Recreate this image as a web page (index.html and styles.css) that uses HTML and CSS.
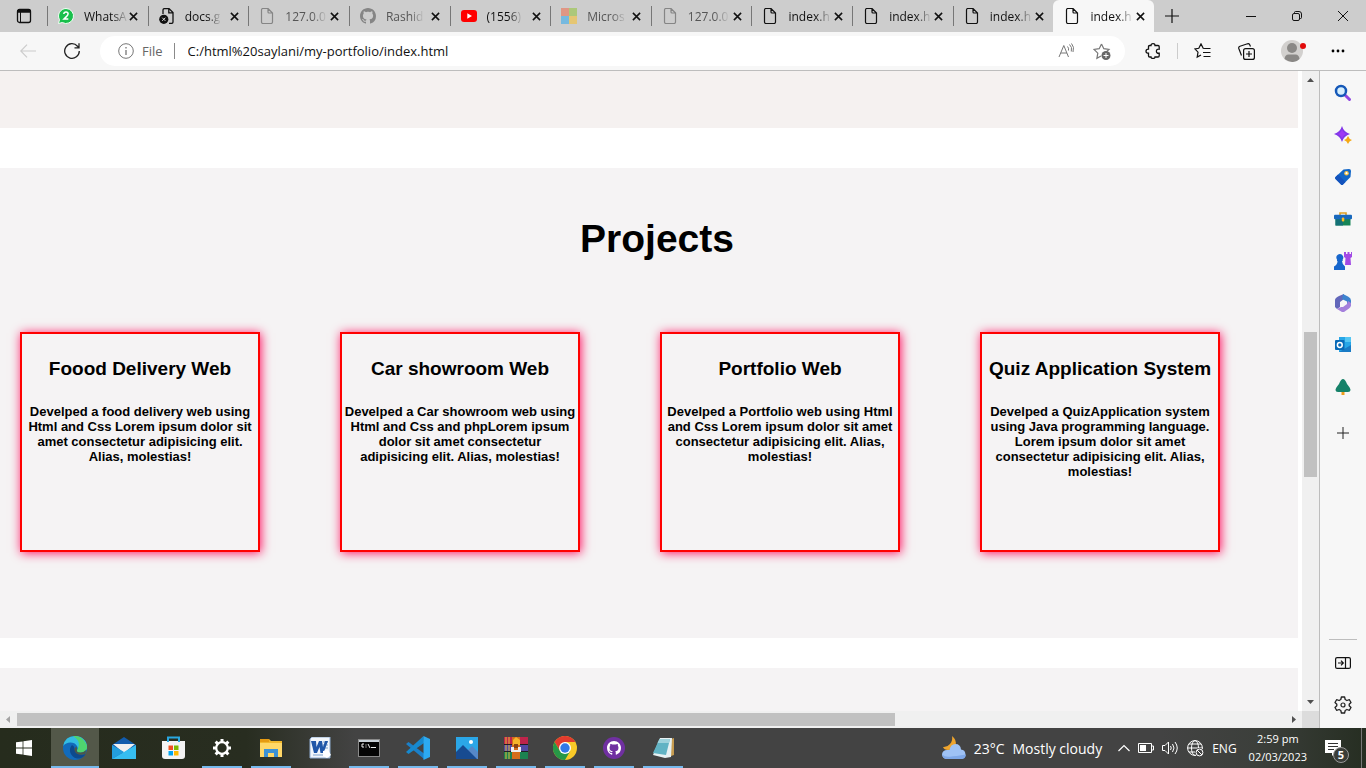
FILE: index.html
```html
<!DOCTYPE html>
<html lang="en">
<head>
<meta charset="utf-8">
<title>Projects</title>
<link rel="stylesheet" href="styles.css">
</head>
<body>
<svg class="defs" aria-hidden="true">
  <symbol id="doc" viewBox="0 0 16 16"><path d="M2.500 2Q2.500 .5 4 .5h5L13.500 5v9q0 1.500-1.500 1.500H4Q2.500 15.500 2.500 14zM9 .5V4q0 1 1 1h3.500" fill="none" stroke="currentColor" stroke-width="1.200"/></symbol>
  <symbol id="x" viewBox="0 0 10 10"><path d="M1 1l8 8M9 1L1 9" fill="none" stroke="currentColor" stroke-width="1.700"/></symbol>
  <symbol id="cat" viewBox="0 0 16 16"><path fill="currentColor" d="M8 0C3.580 0 0 3.580 0 8c0 3.540 2.290 6.530 5.470 7.590.4.070.55-.17.55-.38 0-.19-.01-.82-.01-1.490-2.010.37-2.530-.49-2.690-.94-.09-.23-.48-.94-.82-1.130-.28-.15-.68-.52-.01-.53.63-.01 1.080.58 1.230.82.72 1.210 1.870.87 2.330.66.070-.52.28-.87.51-1.070-1.780-.2-3.640-.89-3.640-3.950 0-.87.31-1.590.82-2.150-.08-.2-.36-1.020.08-2.120 0 0 .67-.21 2.200.82.64-.18 1.320-.27 2-.27s1.360.09 2 .27c1.530-1.040 2.200-.82 2.200-.82.44 1.100.16 1.920.08 2.120.51.56.82 1.270.82 2.150 0 3.070-1.870 3.750-3.650 3.950.29.25.54.73.54 1.480 0 1.070-.01 1.930-.01 2.200 0 .21.15.46.55.38A8.010 8.010 0 0 0 16 8c0-4.420-3.580-8-8-8z"/></symbol>
</svg>

<header class="tabbar">
  <button class="tab-menu" aria-label="Tab actions"><svg width="16" height="16" viewBox="0 0 16 16"><rect x="1.500" y="1.500" width="13" height="13" rx="2" fill="none" stroke="#111" stroke-width="1.300"/><path d="M1.500 4V3q0-1.500 1.500-1.500h10q1.500 0 1.500 1.500v1zM1.500 3h13v1h-13z" fill="#111" stroke="#111"/><path d="M4.500 4v10" stroke="#111"/></svg></button>
  <nav class="tabs" aria-label="Open tabs">
    <div class="tab"><button class="tab-link"><svg width="16" height="16" viewBox="0 0 16 16"><path d="M8 .5a7.500 7.500 0 1 1-3.700 14L.5 15.500l1-3.800A7.500 7.500 0 0 1 8 .5z" fill="#19bf4c" stroke="#f4fff6"/><path d="M5.800 6q.2-2 2.200-2t2.100 1.800q0 1.300-1.500 2.600L6 11h4.300" fill="none" stroke="#fff" stroke-width="1.500"/></svg><span>WhatsA</span></button><button class="close" aria-label="Close tab"><svg><use href="#x"/></svg></button></div>
    <div class="tab"><button class="tab-link"><svg width="16" height="16" viewBox="0 0 16 16"><path d="M4 6V2Q4 .6 5.400.6H10L14 4.500V14q0 1.400-1.400 1.400H10M9.800.6v4.200H14" fill="none" stroke="#111" stroke-width="1.300"/><circle cx="4.800" cy="11.300" r="4.600" fill="#111"/><path d="M3.200 9.700l3.200 3.200m0-3.200l-3.200 3.200" stroke="#ddd"/></svg><span>docs.g</span></button><button class="close" aria-label="Close tab"><svg><use href="#x"/></svg></button></div>
    <div class="tab faded"><button class="tab-link"><svg width="16" height="16"><use href="#doc"/></svg><span>127.0.0</span></button><button class="close" aria-label="Close tab"><svg><use href="#x"/></svg></button></div>
    <div class="tab faded"><button class="tab-link"><svg width="16" height="16"><use href="#cat"/></svg><span>Rashid</span></button><button class="close" aria-label="Close tab"><svg><use href="#x"/></svg></button></div>
    <div class="tab"><button class="tab-link"><svg width="16" height="16" viewBox="0 0 16 16"><rect y="2" width="16" height="12" rx="3" fill="#f00"/><path d="M6.300 5.300v5.400L11 8z" fill="#fff"/></svg><span>(1556)</span></button><button class="close" aria-label="Close tab"><svg><use href="#x"/></svg></button></div>
    <div class="tab faded"><button class="tab-link"><svg width="16" height="16" viewBox="0 0 16 16"><path fill="#e09684" d="M0 0h8v8H0z"/><path fill="#acc87a" d="M8 0h8v8H8z"/><path fill="#76b9df" d="M0 8h8v8H0z"/><path fill="#e5c673" d="M8 8h8v8H8z"/></svg><span>Micros</span></button><button class="close" aria-label="Close tab"><svg><use href="#x"/></svg></button></div>
    <div class="tab faded"><button class="tab-link"><svg width="16" height="16"><use href="#doc"/></svg><span>127.0.0</span></button><button class="close" aria-label="Close tab"><svg><use href="#x"/></svg></button></div>
    <div class="tab"><button class="tab-link"><svg width="16" height="16"><use href="#doc"/></svg><span>index.h</span></button><button class="close" aria-label="Close tab"><svg><use href="#x"/></svg></button></div>
    <div class="tab"><button class="tab-link"><svg width="16" height="16"><use href="#doc"/></svg><span>index.h</span></button><button class="close" aria-label="Close tab"><svg><use href="#x"/></svg></button></div>
    <div class="tab"><button class="tab-link"><svg width="16" height="16"><use href="#doc"/></svg><span>index.h</span></button><button class="close" aria-label="Close tab"><svg><use href="#x"/></svg></button></div>
    <div class="tab active"><button class="tab-link"><svg width="16" height="16"><use href="#doc"/></svg><span>index.h</span></button><button class="close" aria-label="Close tab"><svg><use href="#x"/></svg></button></div>
  </nav>
  <button class="new-tab" aria-label="New tab"><svg width="14" height="14" viewBox="0 0 14 14"><path d="M7 0v14M0 7h14" stroke="#111" stroke-width="1.200"/></svg></button>
  <div class="window-controls">
    <button aria-label="Minimize"><svg width="10" height="10"><path d="M0 5.500h10" stroke="#111"/></svg></button>
    <button aria-label="Restore"><svg width="10" height="10" viewBox="0 0 10 10"><rect x=".5" y="2.500" width="7" height="7" rx="1.500" fill="none" stroke="#111"/><path d="M2.500 2V1.500q0-1 1-1H7q2.500 0 2.500 2.500v3.500q0 1-1 1H8" fill="none" stroke="#111"/></svg></button>
    <button aria-label="Close"><svg width="10" height="10"><path d="M0 0l10 10M10 0L0 10" stroke="#111"/></svg></button>
  </div>
</header>

<div class="toolbar">
  <button class="nav-button" aria-label="Back"><svg width="16" height="14" viewBox="0 0 16 14"><path d="M16 7H1M7 .7L.8 7 7 13.300" fill="none" stroke="#ccc" stroke-width="1.200"/></svg></button>
  <button class="nav-button" aria-label="Reload"><svg width="16" height="16" viewBox="0 0 16 16"><path d="M15.300 8A7.300 7.300 0 1 1 13.500 3.200L14.500 4.500M15 .3v4.500h-4.500" fill="none" stroke="#222" stroke-width="1.300"/></svg></button>
  <form class="address">
    <svg width="16" height="16" viewBox="0 0 16 16"><circle cx="8" cy="8" r="7.300" fill="none" stroke="#767676"/><path d="M8 7v5M8 4v1.500" stroke="#767676" stroke-width="1.300"/></svg>
    <label for="url">File</label>
    <input id="url" type="text" value="C:/html%20saylani/my-portfolio/index.html">
    <button type="button" aria-label="Read aloud"><svg width="16" height="16" viewBox="0 0 16 16"><path d="M1 14L5.800 2.500 10.500 14M2.700 10h6.200M9.500 3.500q1.500 1.500 1 4M11.500 1.500q3 2.500 1.800 7M13.500 0.500q3.200 3.500 1.500 8.500" fill="none" stroke="#777"/></svg></button>
    <button type="button" aria-label="Add to favorites"><svg width="18" height="17" viewBox="0 0 18 17"><path d="M8.500 1l2.300 4.700 5.200.7-2.500 2.400M8.500 1L6.200 5.700 1 6.400l3.800 3.700-.9 5.200L8 13" fill="none" stroke="#777" stroke-width="1.200"/><circle cx="13" cy="12.500" r="4.500" fill="#666"/><path d="M13 10v5M10.500 12.500h5" stroke="#fff"/></svg></button>
  </form>
  <div class="tools">
    <button aria-label="Extensions"><svg width="16" height="16" viewBox="0 0 16 16"><path d="M6 2.500Q6 .7 8 .7T10 2.500h3q1.200 0 1.200 1.200v2.500q-2.800-.3-2.800 2t2.800 2v2.600q0 1.200-1.200 1.200h-3q0 1.500-2 1.500T6 14H4.700q-1.200 0-1.200-1.200V10.200Q1 10.200 1 8.200t2.500-2V3.700q0-1.200 1.200-1.200z" fill="none" stroke="#111" stroke-width="1.300"/></svg></button>
    <i class="divider"></i>
    <button aria-label="Favorites"><svg width="17" height="16" viewBox="0 0 17 16"><path d="M10.500 5.500L9.200 5.300 7 .9 4.800 5.300.9 5.900l3.100 3.200-.8 5L7 12M10.500 5.500h6M9 9.500h7.500M9.500 13.500h7" fill="none" stroke="#111" stroke-width="1.200"/></svg></button>
    <button aria-label="Collections"><svg width="17" height="17" viewBox="0 0 17 17"><rect x="5.600" y="5.600" width="10.800" height="10.800" rx="2" fill="none" stroke="#111" stroke-width="1.200"/><path d="M11 8v6M8 11h6M3.500 12.500L.8 5.500Q.3 3.800 2 3.200L9.500.8q1.500-.4 2.200 1l.8 1.800" fill="none" stroke="#111" stroke-width="1.200"/></svg></button>
    <button class="profile" aria-label="Profile"><svg width="28" height="24" viewBox="0 0 28 24"><circle cx="12" cy="12" r="11" fill="#d2d0ce"/><circle cx="12" cy="9" r="5" fill="#8a8886"/><path d="M4.500 20q.5-4.500 4-4.500h7q3.500 0 4 4.500Q16 23.500 12 23t-7.500-3z" fill="#8a8886"/><circle cx="23" cy="7" r="3" fill="#e20b0b"/></svg></button>
    <button aria-label="Settings and more"><svg width="14" height="4"><circle cx="2" cy="2" r="1.400"/><circle cx="7" cy="2" r="1.400"/><circle cx="12" cy="2" r="1.400"/></svg></button>
  </div>
</div>

<div class="browser">
  <div class="viewport">
    <main class="page">
      <section class="intro"></section>
      <section class="projects">
        <h1>Projects</h1>
        <div class="cards">
          <article class="card"><h3>Foood Delivery Web</h3><h5>Develped a food delivery web using<br>Html and Css Lorem ipsum dolor sit<br>amet consectetur adipisicing elit.<br>Alias, molestias!</h5></article>
          <article class="card"><h3>Car showroom Web</h3><h5>Develped a Car showroom web using<br>Html and Css and phpLorem ipsum<br>dolor sit amet consectetur<br>adipisicing elit. Alias, molestias!</h5></article>
          <article class="card"><h3>Portfolio Web</h3><h5>Develped a Portfolio web using Html<br>and Css Lorem ipsum dolor sit amet<br>consectetur adipisicing elit. Alias,<br>molestias!</h5></article>
          <article class="card"><h3>Quiz Application System</h3><h5>Develped a QuizApplication system<br>using Java programming language.<br>Lorem ipsum dolor sit amet<br>consectetur adipisicing elit. Alias,<br>molestias!</h5></article>
        </div>
      </section>
      <section class="next"></section>
    </main>
    <div class="scroll-y"><svg width="7" height="4"><path d="M0 4h7L3.500 0z" fill="#505050"/></svg><div class="track"><div class="thumb"></div></div><svg width="7" height="4"><path d="M0 0h7L3.500 4z" fill="#505050"/></svg></div>
    <div class="scroll-x"><svg width="4" height="7"><path d="M4 0v7L0 3.500z" fill="#a3a3a3"/></svg><div class="thumb"></div><div class="track"></div><svg width="4" height="7"><path d="M0 0v7l4-3.500z" fill="#505050"/></svg></div>
    <div class="corner"></div>
  </div>
  <aside class="sidebar">
    <button aria-label="Search"><svg width="18" height="18" viewBox="0 0 18 18"><path d="M10.500 10.500l5 5" stroke="#9147e0" stroke-width="3" stroke-linecap="round"/><circle cx="7" cy="7" r="5" fill="#d5effd" stroke="#1558b8" stroke-width="2.500"/></svg></button>
    <button aria-label="Discover"><svg width="18" height="18" viewBox="0 0 18 18"><path d="M8 0q1.800 6.200 8 8-6.200 1.800-8 8-1.800-6.200-8-8 6.200-1.800 8-8z" fill="#8238e8"/><path d="M8 3q.8 4.200 5 5-4.200.8-5 5-.8-4.200-5-5 4.200-.8 5-5z" fill="#9e39f5"/><path d="M14 10q1 3 4 4-3 1-4 4-1-3-4-4 3-1 4-4z" fill="#f5a914"/></svg></button>
    <button aria-label="Shopping"><svg width="18" height="18" viewBox="0 0 18 18"><path d="M9.500 1.500L15 1q2 0 2 2l-.5 6L9 16.500q-1 1-2 0L1.500 11q-1-1 0-2z" fill="#1267c8"/><path d="M1.500 9L4 6.500 11.500 14 9 16.500q-1 1-2 0L1.500 11q-1-1 0-2z" fill="#1453bd"/><circle cx="12.500" cy="5.200" r="1.700" fill="#fff" stroke="#f6c23f" stroke-width="1.200"/></svg></button>
    <button aria-label="Tools"><svg width="18" height="18" viewBox="0 0 18 18"><path d="M6 5V3h6v2" fill="none" stroke="#e0a126" stroke-width="1.600"/><path d="M1.500 8h15v7.500h-15z" fill="#168456"/><path d="M1.500 8H9v7.500H1.500z" fill="#147077"/><rect y="4.800" width="18" height="4.500" rx="1" fill="#1868bd"/><rect x="7.800" y="7.500" width="2.500" height="4" rx="1" fill="#ffbd24"/></svg></button>
    <button aria-label="Games"><svg width="18" height="18" viewBox="0 0 18 18"><path d="M10 0h2v2h1.500V0h2v2H17V0h1v5l-1.500 1 .5 7h-6l.5-7L10 5z" fill="#a24ae5"/><path d="M6 2a3.500 3.500 0 0 1 2.700 5.500V9H8q0 3 3 5.500V18H0v-3.500q3.500-2 3.500-5.500H3V7.500A3.500 3.500 0 0 1 6 2z" fill="#1766cc"/></svg></button>
    <button aria-label="Microsoft 365"><svg width="18" height="18" viewBox="0 0 18 18"><path d="M5 2l5-2v5L6 8v5l-3 2-2-2V6q0-2 4-4z" fill="#6267ba"/><path d="M9 0l5 2.500q3 1.500 3 4V12l-4-2V7.500L8 5z" fill="#3d83cf"/><path d="M17 9v2q0 2-2 3.500L10 18H8l-5-3 4-2h2l4-3 1-3z" fill="#a580dc"/></svg></button>
    <button aria-label="Outlook"><svg width="18" height="18" viewBox="0 0 18 18"><path d="M5 1h12v15H5z" fill="#27a6e7"/><path d="M11 1h6v5h-6z" fill="#54c6f3"/><path d="M5 16l12-7v7z" fill="#197bc5"/><rect x="1" y="4" width="9.500" height="10" rx="1" fill="#086ab7"/><circle cx="5.800" cy="9" r="2.400" fill="none" stroke="#fff" stroke-width="1.500"/></svg></button>
    <button aria-label="Drop"><svg width="18" height="18" viewBox="0 0 18 18"><path d="M7.500 12h3v5h-3z" fill="#ed9d1c"/><path d="M9 1q2 0 4 5 3.500 4 3.500 6T14 14H4q-2.500 0-2.500-2T5 6q2-5 4-5z" fill="#168269"/></svg></button>
    <button class="add" aria-label="Customize"><svg width="12" height="12"><path d="M6 0v12M0 6h12" stroke="#222"/></svg></button>
    <div class="sidebar-end">
      <button aria-label="Hide sidebar"><svg width="16" height="12" viewBox="0 0 16 12"><rect x=".6" y=".6" width="14.800" height="10.800" rx="1.500" fill="none" stroke="#111" stroke-width="1.200"/><path d="M10.500 0v12M3 6h5M6 3.700L8.300 6 6 8.300" fill="none" stroke="#111" stroke-width="1.200"/></svg></button>
      <button aria-label="Settings"><svg width="18" height="18" viewBox="0 0 18 18"><path d="M7.400 1h3.200l.6 2.500 1.700 1 2.500-.8 1.600 2.800L15.200 8.300v1.400l1.800 1.800-1.600 2.800-2.500-.8-1.700 1-.6 2.500H7.400l-.6-2.500-1.700-1-2.500.8L1 11.500l1.800-1.800V8.300L1 6.500l1.600-2.800 2.500.8 1.700-1z" fill="none" stroke="#222" stroke-width="1.300" stroke-linejoin="round"/><circle cx="9" cy="9" r="2" fill="none" stroke="#222" stroke-width="1.200"/></svg></button>
    </div>
  </aside>
</div>

<footer class="taskbar">
  <div class="apps">
    <button class="start" aria-label="Start"><svg width="16" height="16" viewBox="0 0 16 16"><path d="M0 2.300l6.600-.9v6.200H0zM7.400 1.200L16 0v7.600H7.400zM0 8.400h6.600v6.200L0 13.700zM7.400 8.400H16V16l-8.600-1.200z" fill="#fff"/></svg></button>
    <button class="running current" aria-label="Microsoft Edge"><svg width="24" height="24" viewBox="0 0 24 24"><circle cx="12" cy="12" r="12" fill="#126bbb"/><path d="M.2 10Q2 0 12 0c7 0 12 5 12 10.500 0 4-3.500 6-6.500 6-2.500 0-4-1-3.500-2 1-1.500 1-3 0-4.500C11.500 5 3 5.500.2 10z" fill="#34bde2"/><path d="M10 .2Q16-.8 20.500 4 24 8 24 11c0 4-3.500 5.500-6.500 5.500-2.500 0-4-1-3.500-2C17 9 17 4 10 .2z" fill="#4fd46f"/><path d="M9 9c-4 4-2 12 5 13.500 4 .5 7.500-2 8.500-4.500-5 2-11-.5-11-5.500Q11.500 10 9 9z" fill="#0d4a8d"/><path d="M13.500 10.500q1 2.500.3 4.500.5 1.500 3.700 1.500 3 0 5.500-2.500l-.5 4c-5 2-11 0-11-4.500q0-2 2-3z" fill="#4c574b"/></svg></button>
    <button aria-label="Mail"><svg width="24" height="22" viewBox="0 0 24 22"><path d="M0 8l12-8 12 8v14H0z" fill="#125cad"/><path d="M1 7h22L12 16z" fill="#f0f0f0"/><path d="M0 8l12 7L0 22z" fill="#239ddc"/><path d="M24 8L0 22h24z" fill="#36bdf0"/></svg></button>
    <button aria-label="Microsoft Store"><svg width="24" height="24" viewBox="0 0 24 24"><path d="M7 6V1.500h11V6" fill="none" stroke="#29a8e1" stroke-width="2"/><path d="M1 5h23v15q0 3-3 3H4q-3 0-3-3z" fill="#f3f3f3"/><path d="M7.500 9.500h4.500V14H7.500z" fill="#f05022"/><path d="M13 9.500h4.500V14H13z" fill="#7fba00"/><path d="M7.500 15H12v4.500H7.500z" fill="#00a4ef"/><path d="M13 15h4.500v4.500H13z" fill="#ffb900"/><path d="M7 6V3.500M18 6V3.500" stroke="#29a8e1" stroke-width="2"/></svg></button>
    <button class="running" aria-label="Settings"><svg width="20" height="20" viewBox="0 0 20 20"><circle cx="10" cy="10" r="5.800" fill="none" stroke="#fff" stroke-width="2.200"/><path d="M10 1v3M10 16v3M1 10h3M16 10h3M3.600 3.600l2.200 2.200M14.200 14.200l2.200 2.200M3.600 16.400l2.200-2.200M14.200 5.800l2.200-2.200" stroke="#fff" stroke-width="3"/></svg></button>
    <button class="running" aria-label="File Explorer"><svg width="22" height="20" viewBox="0 0 22 20"><path d="M0 1h9l2 2h11v16H0z" fill="#f1b72d"/><path d="M0 1h9v3H0z" fill="#e69b13"/><path d="M0 5h22v14H0z" fill="#ffd768"/><path d="M4 19v-8h14v8h-4v-4H8v4z" fill="#3c91d5"/></svg></button>
    <button aria-label="Word"><svg width="22" height="22" viewBox="0 0 22 22"><path d="M3 0h18v21H1V2z" fill="#f2f6fb" stroke="#8eabd0"/><path d="M14 5h5M14 8h5M14 11h5M4 18h14" stroke="#7fa1cc"/><path d="M2 4h5l.5 6L10 4h3l1 6 2-6h3l-4.500 12h-3L10.500 10 8 16H5z" fill="#1f56a8"/><path d="M14 14l5-1 3 5-4 3-4-2z" fill="#fff"/></svg></button>
    <button class="running" aria-label="Command Prompt"><svg width="22" height="18" viewBox="0 0 22 18"><rect x=".5" y=".5" width="21" height="17" fill="#050505" stroke="#8a8a8a"/><path d="M1 1h20v2H1z" fill="#c9d1d8"/><path d="M6 5H4v3h2M8 5.500v1M8 7.500v1M10 5l2 4M13 8.500h5" fill="none" stroke="#eee"/></svg></button>
    <button class="running" aria-label="Visual Studio Code"><svg width="24" height="24" viewBox="0 0 24 24"><path d="M2.500 6L18 17.500V23L0 8z" fill="#1b80c9"/><path d="M17.500 0L18 7 2.500 18 0 16z" fill="#1689cf"/><path d="M17.500 0L24 3v18l-6.500 3z" fill="#2caaf1"/></svg></button>
    <button class="running" aria-label="Photos"><svg width="22" height="22" viewBox="0 0 22 22"><path d="M0 0h22v22H0z" fill="#2ba7e8"/><path d="M12 13l4-4 6 6v7H12z" fill="#5688c8"/><path d="M0 15l7-7 14 14H0z" fill="#174b91"/><circle cx="15" cy="5" r="2" fill="#fff"/></svg></button>
    <button class="running" aria-label="WinRAR"><svg width="24" height="24" viewBox="0 0 24 24"><path d="M0 1h24v7H0z" fill="#bf244b"/><path d="M0 9h24v6H0z" fill="#5249a4"/><path d="M0 16h24v7H0z" fill="#1b8150"/><path d="M2 1v22M5 1v22" stroke="#e4bd39"/><path d="M0 8.500h24M0 15.500h24" stroke="#211d24"/><path d="M8 1h8v22H8z" fill="#d46d1c"/><path d="M9 4l3-3 4 3v5H9z" fill="#f5b52a"/><path d="M7 11h3v3h4v-3h3v5H7z" fill="#eee"/><path d="M10 8h4v4h-4z" fill="#8a4410"/></svg></button>
    <button class="running" aria-label="Google Chrome"><svg width="24" height="24" viewBox="0 0 24 24"><circle cx="12" cy="12" r="12" fill="#f9c927"/><path d="M1.600 6A12 12 0 0 1 22.400 6H12L7 15z" fill="#e23b2e"/><path d="M1.600 6A12 12 0 0 0 12 24l5.200-9L7 15z" fill="#279847"/><circle cx="12" cy="12" r="6" fill="#fff"/><circle cx="12" cy="12" r="4.700" fill="#3279e8"/></svg></button>
    <button class="running" aria-label="GitHub Desktop"><svg width="22" height="22" viewBox="0 0 22 22"><circle cx="11" cy="11" r="11" fill="#7030a1"/><svg x="4" y="4" width="14" height="14"><use href="#cat"/></svg></svg></button>
    <button class="running" aria-label="Notepad"><svg width="22" height="22" viewBox="0 0 22 22"><path d="M16 3l6-2v17l-6 2z" fill="#c79c50"/><path d="M8 1h12l-1 19-6 1-12-3z" fill="#e7f1f3"/><path d="M7.500 2H18l-4 16L1 16z" fill="#61b3c4"/><path d="M7.500 2H18l-1 4H5.500z" fill="#9ed2dc"/></svg></button>
  </div>
  <div class="tray">
    <button class="weather"><svg width="24" height="24" viewBox="0 0 24 24"><path d="M10 0q5 4 3.500 9T6 14q-4 0-5-3 4 .5 7-3t2-8z" fill="#efa52e"/><path d="M5 23a5 4.500 0 0 1 0-9h2.500Q8.500 8 13.500 8T19 13.500A4.800 4.800 0 0 1 19.500 23z" fill="#9fc2f5"/><path d="M.3 18.500q2.200 2.700 7.700 2.200t16-2.200q-.5 4.500-4.500 4.500H5Q1 23 .3 18.500z" fill="#7fa8e8"/></svg><span>23°C</span><span>Mostly cloudy</span></button>
    <button aria-label="Show hidden icons"><svg width="12" height="8"><path d="M.5 7L6 1.500 11.500 7" fill="none" stroke="#fff" stroke-width="1.200"/></svg></button>
    <button aria-label="Battery"><svg width="16" height="10"><path d="M.5.5h13v9H.5zM14 3h1.500v4H14" fill="none" stroke="#fff"/><path d="M2 2h6v6H2z" fill="#fff"/></svg></button>
    <button aria-label="Volume"><svg width="17" height="14" viewBox="0 0 17 14"><path d="M.5 4.500H3L6.500 1v12L3 9.500H.5zM8.500 5q1.500 2 0 4M10.500 3q3 4 0 8M13 1q4.500 6 0 12" fill="none" stroke="#fff"/></svg></button>
    <button aria-label="Network"><svg width="17" height="17" viewBox="0 0 17 17"><circle cx="8" cy="8" r="7.400" fill="none" stroke="#fff"/><ellipse cx="8" cy="8" rx="3.500" ry="7.400" fill="none" stroke="#fff"/><path d="M.5 8h15M2 4h12M2 12h8" stroke="#fff"/><circle cx="12.500" cy="12.500" r="4.500" fill="#444"/><circle cx="12.500" cy="12.500" r="3.400" fill="none" stroke="#fff"/><path d="M10 10l5 5" stroke="#fff"/></svg></button>
    <button>ENG</button>
    <button class="clock"><span>2:59 pm</span><span>02/03/2023</span></button>
    <button class="notifications" aria-label="5 notifications"><svg width="16" height="16"><path d="M0 0h16v13h-6l-3 3v-3H0z" fill="#fff"/><path d="M3 3.500h10M3 6.500h10M3 9.500h6" stroke="#333"/></svg><b>5</b></button>
  </div>
</footer>
</body>
</html>
```
FILE: styles.css
```css
* { box-sizing: border-box; }

body {
  margin: 0;
  height: 100vh;
  overflow: hidden;
  display: flex;
  flex-direction: column;
  background: #f7f7f7;
  color: #111;
  font-family: "Open Sans", "Noto Sans", sans-serif;
  font-size: 12px;
}

button {
  display: flex;
  align-items: center;
  justify-content: center;
  padding: 0;
  border: 0;
  background: none;
  color: inherit;
  font: inherit;
}

svg { flex: none; }
.defs { position: absolute; width: 0; height: 0; }

/* Tab strip */
.tabbar { display: flex; flex: none; height: 32px; background: #cdcdcd; }
.tab-menu { width: 47px; }
.tabs { display: flex; flex: 1; min-width: 0; }
.tab {
  display: flex;
  flex: 1;
  min-width: 0;
  align-items: center;
  background: linear-gradient(#777, #777) left center / 1px 20px no-repeat;
}
.tab-link {
  flex: 1;
  min-width: 0;
  height: 32px;
  padding-left: 11px;
  gap: 10px;
  justify-content: flex-start;
}
.tab-link span {
  flex: none;
  white-space: nowrap;
  -webkit-mask-image: linear-gradient(90deg, #000 65%, rgba(0, 0, 0, 0.1));
  mask-image: linear-gradient(90deg, #000 65%, rgba(0, 0, 0, 0.1));
}
.tab.faded .tab-link { color: #555; }
.tab.faded .tab-link svg { color: #858585; }
.close { width: 20px; height: 32px; margin-right: 4px; }
.close svg { width: 9px; height: 9px; }
.tab.active { background: #f7f7f7; border-radius: 6px 6px 0 0; }
.new-tab { width: 36px; }
.window-controls { display: flex; margin-left: 38px; }
.window-controls button { width: 46px; }

/* Toolbar */
.toolbar {
  display: flex;
  flex: none;
  align-items: center;
  height: 39px;
  padding-left: 6px;
  border-bottom: 1px solid #bdbdbd;
}
.nav-button { width: 44px; height: 32px; }
.address {
  display: flex;
  flex: 1;
  align-items: center;
  height: 30px;
  margin-left: 6px;
  padding: 0 14px 0 18px;
  border-radius: 15px;
  background: #fff;
  font-size: 13px;
}
.address label {
  margin-left: 8px;
  padding-right: 11px;
  border-right: 1px solid #8a8a8a;
  color: #666;
  line-height: 16px;
}
.address input {
  flex: 1;
  min-width: 0;
  padding: 0 0 0 13px;
  border: 0;
  outline: 0;
  background: none;
  color: #111;
  font: inherit;
}
.address button { margin-left: 19px; }
.tools { display: flex; align-items: center; padding: 0 21px 0 20px; }
.tools .divider { width: 1px; height: 16px; margin: 0 16px; background: #ccc; }
.tools button + button { margin-left: 27px; }
.tools button.profile { margin-left: 25px; }
.tools .profile + button { margin-left: 23px; }

/* Page and scrollbars */
.browser { display: flex; flex: 1; min-height: 0; }
.viewport {
  display: grid;
  flex: 1;
  min-width: 0;
  grid-template: minmax(0, 1fr) 17px / minmax(0, 1fr) 17px;
  border-right: 1px solid #bdbdbd;
}
.page {
  display: flex;
  flex-direction: column;
  padding-right: 4px;
  overflow: hidden;
  background: #fff;
  color: #000;
  font-family: "Liberation Sans", Arial, sans-serif;
}
.intro { flex: none; height: 57px; margin-bottom: 40px; background: #f5f1f0; }
.projects { flex: none; padding-bottom: 86px; background: #f5f3f4; }
.next { flex: 1; margin-top: 30px; background: #f5f3f4; }
.projects h1 {
  margin: 0;
  padding: 48px 0 70px 16px;
  font-size: 39px;
  line-height: 46px;
  text-align: center;
}
.cards { display: flex; gap: 80px; padding-left: 20px; }
.card {
  flex: none;
  width: 240px;
  height: 220px;
  border: 2px solid #f00;
  box-shadow: 1px 1px 10px #ff0f5f;
  text-align: center;
  white-space: nowrap;
}
.card h3 { margin: 24px 0 25px; font-size: 19px; line-height: 21px; }
.card h5 { margin: 0; font-size: 13px; line-height: 15px; }

.scroll-y, .scroll-x { display: flex; align-items: center; background: #f0f0f0; }
.scroll-y { flex-direction: column; padding: 7px 0; gap: 6px; }
.scroll-x { padding: 0 6px; }
.thumb { background: #c1c1c1; }
.scroll-y .track { display: flex; flex: 1; flex-direction: column; padding-top: 244px; }
.scroll-y .thumb { width: 13px; height: 40%; }
.scroll-x .thumb { flex: 9; height: 13px; margin-left: 7px; }
.scroll-x .track { flex: 4; margin-right: 7px; }
.corner { background: #dcdcdc; }

/* Edge sidebar */
.sidebar {
  display: flex;
  flex: none;
  flex-direction: column;
  align-items: center;
  width: 46px;
  padding: 1px 0 2px;
}
.sidebar button { width: 42px; height: 42px; }
.sidebar .add { margin-top: 4px; }
.sidebar-end { margin-top: auto; border-top: 1px solid #bdbdbd; width: 28px; padding-top: 2px; }
.sidebar-end button { width: 28px; }

/* Taskbar */
.taskbar {
  display: flex;
  flex: none;
  justify-content: space-between;
  height: 40px;
  background: linear-gradient(90deg, #262c1d 0, #282d20 18%, #434343 26%, #434343 85%, #3c3f3b 92%, #262e22);
  color: #fff;
}
.apps { display: flex; gap: 1px; }
.apps button { width: 48px; height: 40px; }
.apps .start { width: 50px; padding-right: 2px; }
.running { background: linear-gradient(#76b9ed, #76b9ed) center bottom / 40px 2px no-repeat; }
.apps .current { background: linear-gradient(#76b9ed, #76b9ed) center bottom / 48px 2px no-repeat #535849; }
.tray { display: flex; gap: 8px; padding-right: 4px; }
.weather { gap: 8px; margin-right: 8px; font-size: 14px; }
.clock { flex-direction: column; margin-left: 4px; font-size: 11px; line-height: 18px; }
.notifications {
  position: relative;
  justify-content: flex-start;
  width: 47px;
  padding-left: 10px;
  border-right: 1px solid #777;
}
.notifications b {
  position: absolute;
  left: 18px;
  top: 19px;
  width: 16px;
  height: 16px;
  border: 1px solid #999;
  border-radius: 50%;
  background: #3a3d38;
  font-size: 11px;
  line-height: 14px;
}
```
